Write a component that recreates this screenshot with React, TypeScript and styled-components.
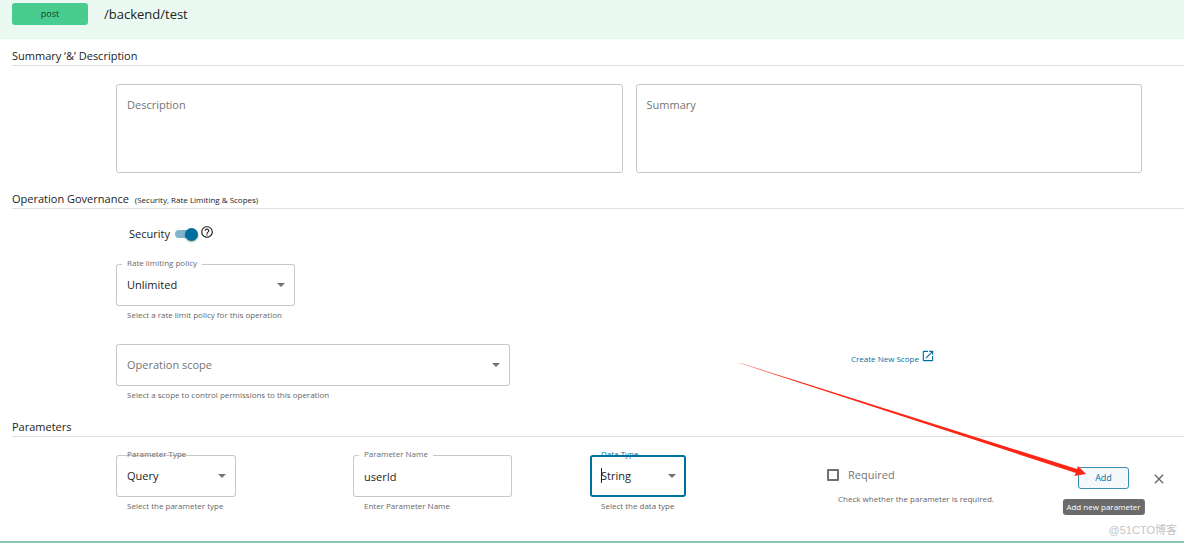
import React, { useState } from "react";
import styled, { createGlobalStyle } from "styled-components";

const GlobalStyle = createGlobalStyle`
  * { box-sizing: border-box; }
  body {
    margin: 0;
    background: #fff;
    color: #222;
    font-family: "Open Sans", "Noto Sans CJK SC", sans-serif;
    font-size: 11px;
    line-height: 16px;
    overflow-x: hidden;
  }
  button, input, select, textarea { font: inherit; color: inherit; margin: 0; }
`;

const Operation = styled.main`
  position: relative;
  border-bottom: 2px solid #86c9ae;
`;

const Header = styled.header`
  display: flex;
  align-items: center;
  gap: 16px;
  height: 39px;
  padding: 0 12px 12px;
  background: #eafaf3;
  border-bottom: 1px solid #dff4eb;
`;

const Verb = styled.button`
  width: 76px;
  height: 22px;
  padding: 0;
  border: 0;
  border-radius: 3px;
  background: #49cc90;
  color: #14402c;
  font-size: 9px;
  margin-top: 1px;
`;

const Path = styled.span`
  font-size: 13px;
  line-height: 20px;
  margin-top: 2px;
`;

const SectionTitle = styled.h2`
  display: flex;
  align-items: center;
  gap: 6px;
  margin: 0 0 0 12px;
  padding: 9px 0 1px;
  border-bottom: 1px solid #e0e0e0;
  font-size: 11px;
  line-height: 16px;
  font-weight: 400;
`;

const Note = styled.small`
  font-size: 8px;
  line-height: 12px;
  padding-top: 2px;
`;

const Body = styled.div<{ $bottom?: number }>`
  padding: 18px 0 ${(p) => p.$bottom ?? 9}px 116px;
`;

const Texts = styled.div`
  display: flex;
  gap: 13px;
  padding-right: 42px;
`;

const Area = styled.textarea`
  flex: 1;
  min-width: 0;
  height: 89px;
  padding: 12px 10px;
  border: 1px solid #c8c8c8;
  border-radius: 3px;
  background: #fff;
  resize: none;
  outline: 0;
  &::placeholder { color: #757575; opacity: 1; }
`;

const SecurityRow = styled.div`
  display: flex;
  align-items: center;
  gap: 3px;
  height: 14px;
  padding-left: 13px;
  margin-bottom: 23px;
`;

const SwitchLabel = styled.label`
  display: flex;
  align-items: center;
  gap: 5px;
`;

const Switch = styled.input`
  appearance: none;
  position: relative;
  width: 22px;
  height: 8px;
  border-radius: 4px;
  background: #7fb4cc;
  &::after {
    content: "";
    position: absolute;
    top: -2px;
    right: -1px;
    width: 13px;
    height: 13px;
    border-radius: 50%;
    background: #006e9c;
    box-shadow: 0 1px 2px rgba(0, 0, 0, 0.35);
  }
`;

const Icon = styled.svg<{ $size: number; $color?: string }>`
  display: block;
  flex: none;
  width: ${(p) => p.$size}px;
  height: ${(p) => p.$size}px;
  fill: ${(p) => p.$color ?? "currentColor"};
`;

const HelpButton = styled.button`
  align-self: flex-start;
  padding: 0;
  border: 0;
  background: none;
  margin-top: -2px;
`;

const Field = styled.div<{ $width?: number }>`
  width: ${(p) => (p.$width ? `${p.$width}px` : "auto")};
  max-width: 100%;
`;

const Outline = styled.div<{ $active?: boolean }>`
  position: relative;
  height: 42px;
  border-radius: 3px;
  box-shadow: inset 0 0 0 ${(p) => (p.$active ? "2px #00719f" : "1px #c8c8c8")};
`;

const FloatLabel = styled.label<{ $notch?: boolean; $active?: boolean }>`
  position: absolute;
  top: -7px;
  left: 6px;
  padding: 0 5px;
  font-size: 8px;
  line-height: 12px;
  color: ${(p) => (p.$active ? "#00719f" : "#6b6b6b")};
  background: ${(p) => (p.$notch ? "#fff" : "transparent")};
`;

const control = `
  appearance: none;
  display: block;
  width: 100%;
  height: 100%;
  padding: 0 24px 0 11px;
  border: 0;
  background: transparent;
  outline: 0;
`;

const Select = styled.select<{ $muted?: boolean }>`
  ${control}
  && { color: ${(p) => (p.$muted ? "#757575" : "#222")}; }
`;

const Input = styled.input`
  ${control}
`;

const Arrow = styled.span`
  position: absolute;
  top: 19px;
  right: 10px;
  border: 4px solid transparent;
  border-top-color: #757575;
  border-bottom: 0;
  pointer-events: none;
`;

const Caret = styled.span`
  position: absolute;
  top: 13px;
  left: 11px;
  width: 1px;
  height: 15px;
  background: #222;
`;

const Helper = styled.p<{ $gap?: number }>`
  margin: ${(p) => p.$gap ?? 3}px 0 0 11px;
  font-size: 8px;
  line-height: 12px;
  color: #666;
  white-space: nowrap;
`;

const ScopeRow = styled.div`
  display: grid;
  grid-template-columns: 735px 1fr;
  margin-top: 23px;
`;

const ScopeLink = styled.a`
  display: flex;
  align-items: center;
  gap: 2px;
  height: 16px;
  margin-top: 4px;
  font-size: 8px;
  color: #00719f;
  text-decoration: none;
  span { padding-top: 6px; }
`;

const Params = styled.div`
  display: grid;
  grid-template-columns: repeat(4, minmax(0, 1fr)) 120px;
`;

const Check = styled.label`
  display: flex;
  align-items: center;
  gap: 9px;
  margin-top: 12px;
  color: #757575;
`;

const Box = styled.input`
  appearance: none;
  width: 12px;
  height: 12px;
  border: 2px solid #707070;
  border-radius: 1px;
`;

const Actions = styled.div`
  display: flex;
  align-items: center;
  gap: 22px;
  height: 24px;
  margin-top: 11px;
  padding-left: 14px;
`;

const AddWrap = styled.div`
  position: relative;
`;

const AddButton = styled.button`
  display: block;
  width: 51px;
  height: 22px;
  padding: 0;
  border: 1px solid #3a8fb5;
  border-radius: 3px;
  background: #f4f8fb;
  color: #00719f;
  font-size: 9px;
`;

const Tooltip = styled.div`
  position: absolute;
  top: calc(100% + 10px);
  left: 50%;
  transform: translateX(-50%);
  padding: 2px 4px;
  border-radius: 3px;
  background: #6b6b6b;
  color: #fff;
  font-size: 8px;
  line-height: 12px;
  white-space: nowrap;
`;

const CloseButton = styled.button`
  padding: 0;
  border: 0;
  background: none;
  margin-top: 2px;
`;

const Pointer = styled.svg`
  position: absolute;
  right: 96px;
  bottom: 60px;
  width: 350px;
  height: 120px;
  pointer-events: none;
`;

const Watermark = styled.span`
  position: absolute;
  right: 7px;
  bottom: 3px;
  font-family: "Liberation Sans", "Noto Sans CJK SC", sans-serif;
  font-size: 11px;
  color: #c4c4c4;
`;

type FieldProps = {
  id: string;
  label: string;
  helper: string;
  width: number;
  options?: string[];
  value?: string;
  notch?: boolean;
  active?: boolean;
};

function FormField({ id, label, helper, width, options, value, notch, active }: FieldProps) {
  return (
    <Field $width={width}>
      <Outline $active={active}>
        {options ? (
          <>
            <Select id={id} defaultValue={value}>
              {options.map((o) => <option key={o}>{o}</option>)}
            </Select>
            <Arrow />
          </>
        ) : (
          <Input id={id} defaultValue={value} />
        )}
        {active && <Caret />}
        <FloatLabel htmlFor={id} $notch={notch} $active={active}>{label}</FloatLabel>
      </Outline>
      <Helper>{helper}</Helper>
    </Field>
  );
}

export default function App() {
  const [secured, setSecured] = useState(true);
  return (
    <>
      <GlobalStyle />
      <Operation>
        <Header>
          <Verb type="button">post</Verb>
          <Path>/backend/test</Path>
        </Header>

        <SectionTitle>Summary ‘&amp;’ Description</SectionTitle>
        <Body>
          <Texts>
            <Area aria-label="Description" placeholder="Description" />
            <Area aria-label="Summary" placeholder="Summary" />
          </Texts>
        </Body>

        <SectionTitle>
          Operation Governance <Note>(Security, Rate Limiting &amp; Scopes)</Note>
        </SectionTitle>
        <Body>
          <SecurityRow>
            <SwitchLabel>
              Security
              <Switch type="checkbox" role="switch" checked={secured} onChange={(e) => setSecured(e.target.checked)} />
            </SwitchLabel>
            <HelpButton type="button" aria-label="Help">
              <Icon $size={14} viewBox="0 0 24 24">
                <path d="M11 18h2v-2h-2v2zm1-16C6.480 2 2 6.480 2 12s4.480 10 10 10 10-4.480 10-10S17.520 2 12 2zm0 18c-4.410 0-8-3.590-8-8s3.590-8 8-8 8 3.590 8 8-3.590 8-8 8zm0-14c-2.210 0-4 1.790-4 4h2c0-1.100.9-2 2-2s2 .9 2 2c0 2-3 1.750-3 5h2c0-2.250 3-2.500 3-5 0-2.210-1.790-4-4-4z" />
              </Icon>
            </HelpButton>
          </SecurityRow>
          <FormField id="rate" label="Rate limiting policy" helper="Select a rate limit policy for this operation" width={179} options={["Unlimited"]} value="Unlimited" notch />
          <ScopeRow>
            <Field $width={394}>
              <Outline>
                <Select id="scope" aria-label="Operation scope" $muted defaultValue="">
                  <option value="">Operation scope</option>
                </Select>
                <Arrow />
              </Outline>
              <Helper>Select a scope to control permissions to this operation</Helper>
            </Field>
            <ScopeLink href="#scopes">
              <span>Create New Scope</span>
              <Icon $size={14} viewBox="0 0 24 24">
                <path d="M19 19H5V5h7V3H5c-1.110 0-2 .9-2 2v14c0 1.100.89 2 2 2h14c1.100 0 2-.9 2-2v-7h-2v7zM14 3v2h3.590l-9.830 9.830 1.410 1.410L19 6.410V10h2V3h-7z" />
              </Icon>
            </ScopeLink>
          </ScopeRow>
        </Body>

        <SectionTitle>Parameters</SectionTitle>
        <Body $bottom={29}>
          <Params>
            <FormField id="ptype" label="Parameter Type" helper="Select the parameter type" width={120} options={["Query", "Header", "Cookie"]} value="Query" />
            <FormField id="pname" label="Parameter Name" helper="Enter Parameter Name" width={159} value="userId" notch />
            <FormField id="dtype" label="Data Type" helper="Select the data type" width={96} options={["String", "Integer", "Boolean"]} value="String" active />
            <div>
              <Check>
                <Box type="checkbox" />
                Required
              </Check>
              <Helper $gap={10}>Check whether the parameter is required.</Helper>
            </div>
            <Actions>
              <AddWrap>
                <AddButton type="button" aria-describedby="add-tip">Add</AddButton>
                <Tooltip id="add-tip" role="tooltip">Add new parameter</Tooltip>
              </AddWrap>
              <CloseButton type="button" aria-label="Remove">
                <Icon $size={16} $color="#666" viewBox="0 0 24 24">
                  <path d="M19 6.410L17.590 5 12 10.590 6.410 5 5 6.410 10.590 12 5 17.590 6.410 19 12 13.410 17.590 19 19 17.590 13.410 12z" />
                </Icon>
              </CloseButton>
            </Actions>
          </Params>
        </Body>

        <Pointer viewBox="0 0 350 120" aria-hidden="true">
          <defs>
            <linearGradient id="fade" x1="0" x2="1" y1="0" y2="0">
              <stop offset="0" stopColor="#ff2414" stopOpacity="0.4" />
              <stop offset="0.15" stopColor="#ff2414" />
            </linearGradient>
          </defs>
          <path fill="url(#fade)" d="M1 2 L3 2 L339 108 L340 105 L348 113 L336 115 L338 112 Z" />
        </Pointer>
        <Watermark>@51CTO博客</Watermark>
      </Operation>
    </>
  );
}
